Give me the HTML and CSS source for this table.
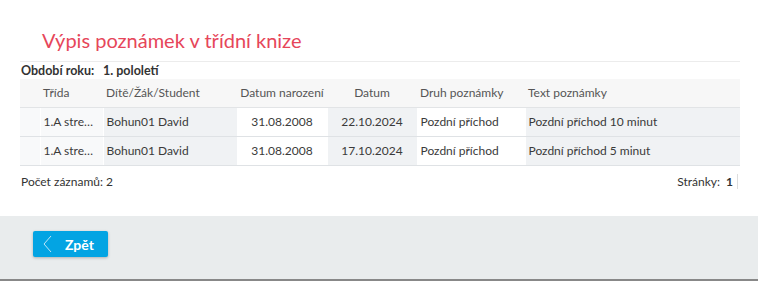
FILE: index.html
```html
<!DOCTYPE html>
<html lang="cs">
<head>
<meta charset="utf-8">
<title>Výpis poznámek v třídní knize</title>
<link rel="stylesheet" href="styles.css">
</head>
<body>
<main class="page">
  <h1 class="title">Výpis poznámek v třídní knize</h1>
  <div class="period"><span class="period-label">Období roku:</span><span class="period-value">1. pololetí</span></div>
  <table class="grid">
    <colgroup>
      <col class="c-sel"><col class="c-class"><col class="c-name"><col class="c-birth"><col class="c-date"><col class="c-kind"><col class="c-text">
    </colgroup>
    <thead>
      <tr>
        <th></th>
        <th class="left">Třída</th>
        <th class="left">Dítě/Žák/Student</th>
        <th>Datum narození</th>
        <th>Datum</th>
        <th class="left">Druh poznámky</th>
        <th class="left">Text poznámky</th>
      </tr>
    </thead>
    <tbody>
      <tr>
        <td class="sel"></td>
        <td class="cls">1.A stre…</td>
        <td class="shade">Bohun01 David</td>
        <td class="center">31.08.2008</td>
        <td class="center shade">22.10.2024</td>
        <td>Pozdní příchod</td>
        <td class="shade">Pozdní příchod 10 minut</td>
      </tr>
      <tr>
        <td class="sel"></td>
        <td class="cls">1.A stre…</td>
        <td class="shade">Bohun01 David</td>
        <td class="center">31.08.2008</td>
        <td class="center shade">17.10.2024</td>
        <td>Pozdní příchod</td>
        <td class="shade">Pozdní příchod 5 minut</td>
      </tr>
    </tbody>
  </table>
  <div class="pager">
    <span class="count">Počet záznamů: 2</span>
    <span class="pages">Stránky: <b>1</b></span>
  </div>
</main>
<footer class="actions">
  <button class="back" type="button">
    <svg class="chev" width="9" height="18" viewBox="0 0 9 18"><path d="M8 1 L1 9 L8 17" fill="none" stroke="#bfe6f8" stroke-width="1"/></svg>
    <span>Zpět</span>
  </button>
</footer>
</body>
</html>
```
FILE: styles.css
```css
* { box-sizing: border-box; }

html, body {
  margin: 0;
  padding: 0;
  background: #fff;
  font-family: Lato, "Open Sans", sans-serif;
  font-size: 12px;
  color: #3a3a3a;
}

.page {
  height: 216px;
  padding: 0 18px 0 20px;
}

.title {
  margin: 0;
  height: 62px;
  padding: 28px 0 0 22px;
  font-size: 20px;
  line-height: 24px;
  font-weight: 400;
  color: #e6465a;
  border-bottom: 1px solid #ececec;
}

.period {
  height: 17px;
  line-height: 18px;
  font-weight: 700;
  font-size: 12.5px;
  color: #333;
  padding-left: 1px;
}

.period-label {
  display: inline-block;
  width: 82px;
}

.grid {
  width: 100%;
  border-collapse: collapse;
  table-layout: fixed;
}

.c-sel { width: 20px; }
.c-class { width: 63px; }
.c-name { width: 134px; }
.c-birth { width: 90px; }
.c-date { width: 90px; }
.c-kind { width: 108px; }

.grid th {
  height: 28px;
  background: #f7f7f7;
  border-bottom: 1px solid #e2e4e6;
  font-weight: 400;
  color: #555;
  text-align: center;
  padding: 0 3px;
  white-space: nowrap;
}

.grid th.left { text-align: left; }

.grid td {
  height: 29px;
  padding: 0 3px;
  border-bottom: 1px solid #dfe2e5;
  border-left: 1px solid #fff;
  background: #fff;
  white-space: nowrap;
  overflow: hidden;
}

.grid td.sel { border-left: 0; background: #f8f9fa; }
.grid td.cls { background: #f8f9fa; }
.grid td.shade { background: #f0f2f4; }
.grid td.center { text-align: center; }

.pager {
  display: flex;
  justify-content: space-between;
  align-items: center;
  height: 31px;
  padding: 0 2px 0 1px;
  color: #333;
}

.pages b {
  font-weight: 700;
  padding-right: 4px;
  margin-left: 3px;
  border-right: 1px solid #ddd;
}

.actions {
  height: 65px;
  background: #e9eced;
  border-bottom: 2px solid #888;
  padding: 15px 0 0 33px;
}

.back {
  display: flex;
  align-items: center;
  gap: 13px;
  width: 75px;
  height: 26px;
  padding: 0 0 0 10px;
  border: 0;
  border-radius: 2px;
  background: #03a4e3;
  box-shadow: 0 1px 3px rgba(0, 0, 0, 0.25);
  color: #fff;
  font-family: Lato, "Open Sans", sans-serif;
  font-size: 14px;
  font-weight: 700;
}

.chev { display: block; }
```
